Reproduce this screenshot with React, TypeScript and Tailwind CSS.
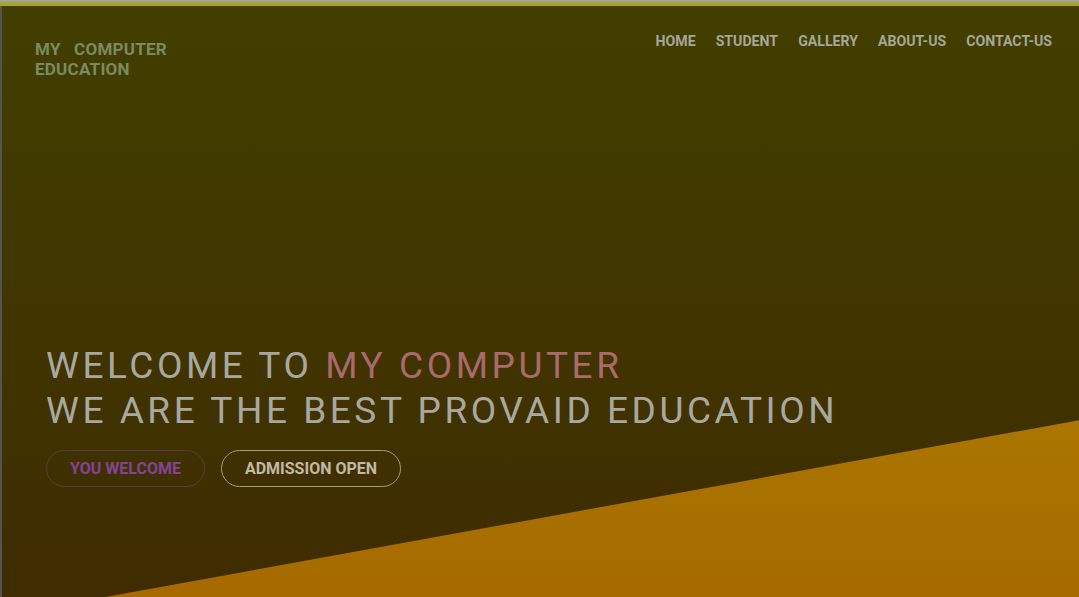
const navItems = ['HOME', 'STUDENT', 'GALLERY', 'ABOUT-US', 'CONTACT-US'];

export default function App() {
  return (
    <div className="w-[1079px] h-[597px] overflow-hidden flex flex-col bg-[#3f3400] font-['Roboto','Liberation_Sans',sans-serif]">
      <div className="h-[2px] bg-[#a3a39b]" />
      <div className="h-[4px] bg-[#a7a52b]" />
      <div className="flex flex-1">
        <div className="w-[2px] bg-[#55554b]" />
        <section className="relative flex-1 bg-gradient-to-b from-[#413f00] to-[#3f2c00]">
          {/* slanted yellow band */}
          <div className="absolute inset-0 bg-gradient-to-b from-[#b49000] via-[#ae7e00] to-[#a66a00] [clip-path:polygon(100%_70.1%,100%_100%,9.6%_100%)]" />

          <div className="relative flex flex-col">
            <header className="flex items-start justify-between pl-[33px] pr-[27px] pt-[25px]">
              <div className="mt-[8px] text-[17px] leading-[20px] font-bold tracking-[0.25px] text-[#7b8a62]">
                <div>MY&nbsp;&nbsp;&nbsp;COMPUTER</div>
                <div>EDUCATION</div>
              </div>
              <nav className="flex gap-[20px] text-[14.15px] leading-[20px] font-bold text-[#a6a699]">
                {navItems.map((item) => (
                  <a key={item} href="#" className="hover:text-white">
                    {item}
                  </a>
                ))}
              </nav>
            </header>

            <div className="pl-[44px] mt-[264px]">
              <h1 className="text-[37px] leading-[45px] tracking-[3.55px] font-normal text-[#a8a8a0]">
                WELCOME TO <span className="text-[#a86a6a]">MY COMPUTER</span>
                <br />
                WE ARE THE BEST PROVAID EDUCATION
              </h1>
              <div className="flex gap-[16px] mt-[17px]">
                <button className="h-[37px] w-[159px] rounded-full border border-[#5b3a4c] text-[16px] leading-[20px] font-bold text-[#83439a]">
                  YOU WELCOME
                </button>
                <button className="h-[37px] w-[180px] rounded-full border border-[#a49b82] text-[16px] leading-[20px] font-bold text-[#c1b9a8]">
                  ADMISSION OPEN
                </button>
              </div>
            </div>
          </div>
        </section>
      </div>
    </div>
  );
}
